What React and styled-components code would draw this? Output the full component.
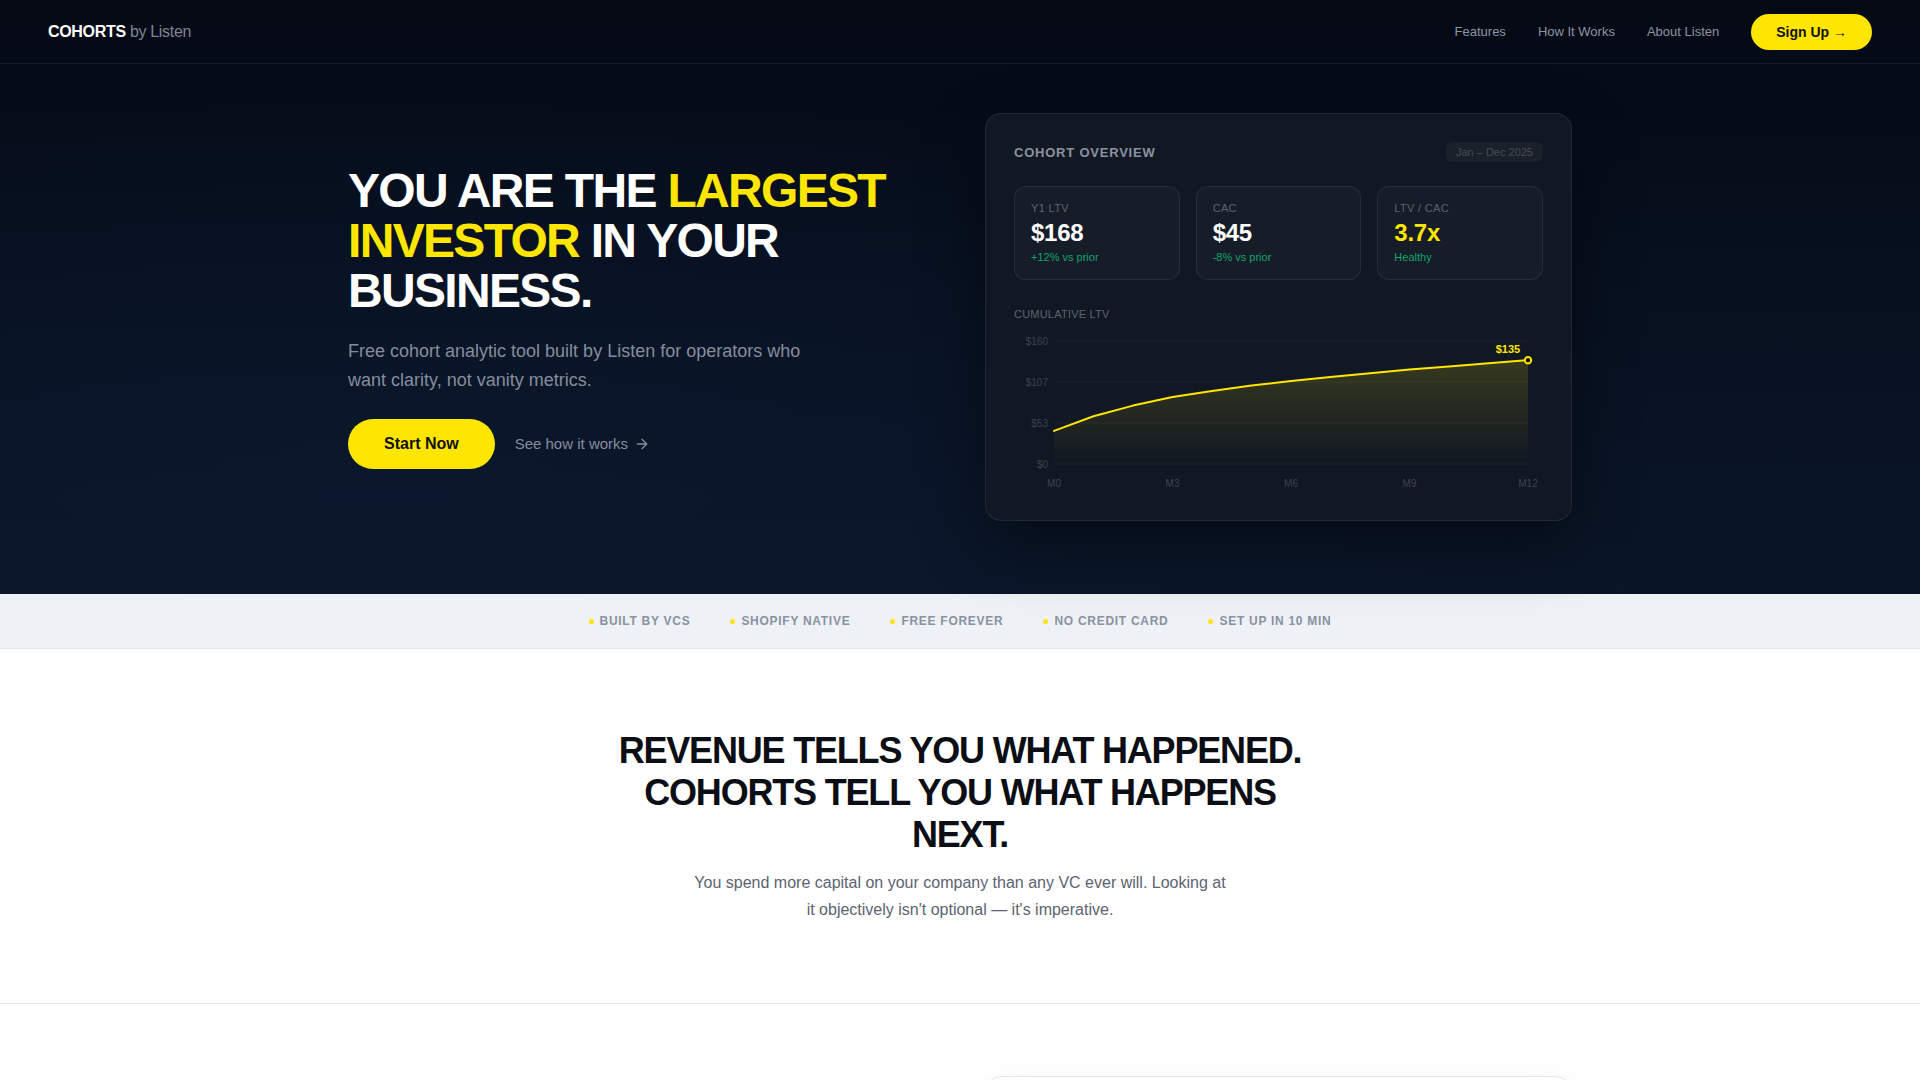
import React from "react";
import styled, { createGlobalStyle } from "styled-components";
import { ArrowRight } from "lucide-react";

const YELLOW = "#ffe600";

const GlobalStyle = createGlobalStyle`
  * {
    box-sizing: border-box;
  }
  body {
    margin: 0;
    background: #ffffff;
    font-family: "Liberation Sans", Arial, sans-serif;
    -webkit-font-smoothing: antialiased;
  }
`;

const metrics = [
  { label: "Y1 LTV", value: "$168", note: "+12% vs prior" },
  { label: "CAC", value: "$45", note: "-8% vs prior" },
  { label: "LTV / CAC", value: "3.7x", note: "Healthy", highlight: true },
];

const proofPoints = ["Built by VCs", "Shopify native", "Free forever", "No credit card", "Set up in 10 min"];

// cumulative LTV by month, M0..M12
const ltv = [43, 62, 76, 87, 95, 102, 108, 113, 118, 123, 127, 131, 135];

export default function App() {
  return (
    <>
      <GlobalStyle />
      <Hero>
        <Nav>
          <Logo>
            COHORTS <span>by Listen</span>
          </Logo>
          <NavLinks>
            <NavLink href="#features">Features</NavLink>
            <NavLink href="#how">How It Works</NavLink>
            <NavLink href="#about">About Listen</NavLink>
            <SignUp type="button">Sign Up →</SignUp>
          </NavLinks>
        </Nav>
        <HeroGrid>
          <HeroCopy>
            <Headline>
              YOU ARE THE <Accent>LARGEST INVESTOR</Accent> IN YOUR BUSINESS.
            </Headline>
            <Lead>Free cohort analytic tool built by Listen for operators who want clarity, not vanity metrics.</Lead>
            <Actions>
              <PrimaryButton type="button">Start Now</PrimaryButton>
              <GhostLink href="#how">
                See how it works <ArrowRight size={16} strokeWidth={2} />
              </GhostLink>
            </Actions>
          </HeroCopy>
          <OverviewCard>
            <CardHeader>
              <CardTitle>COHORT OVERVIEW</CardTitle>
              <DateBadge>Jan – Dec 2025</DateBadge>
            </CardHeader>
            <MetricGrid>
              {metrics.map((m) => (
                <Metric key={m.label}>
                  <MetricLabel>{m.label}</MetricLabel>
                  <MetricValue highlight={m.highlight}>{m.value}</MetricValue>
                  <MetricNote>{m.note}</MetricNote>
                </Metric>
              ))}
            </MetricGrid>
            <ChartLabel>CUMULATIVE LTV</ChartLabel>
            <LtvChart data={ltv} />
          </OverviewCard>
        </HeroGrid>
      </Hero>

      <ProofStrip>
        {proofPoints.map((p) => (
          <ProofItem key={p}>{p}</ProofItem>
        ))}
      </ProofStrip>

      <Statement>
        <StatementTitle>REVENUE TELLS YOU WHAT HAPPENED. COHORTS TELL YOU WHAT HAPPENS NEXT.</StatementTitle>
        <StatementText>
          You spend more capital on your company than any VC ever will. Looking at it objectively isn't optional —
          it's imperative.
        </StatementText>
      </Statement>

      <NextSection>
        <NextGrid>
          <div />
          <PreviewCard />
        </NextGrid>
      </NextSection>
    </>
  );
}

function LtvChart({ data }) {
  const left = 40;
  const right = 514;
  const base = 136;
  const top = 13;
  const scale = (base - top) / 160;
  const step = (right - left) / (data.length - 1);
  const pts = data.map((v, i) => [left + i * step, base - v * scale]);
  const line = pts.map(([x, y]) => `${x.toFixed(1)},${y.toFixed(1)}`).join(" ");
  const area = `M${left},${base} L${line.replace(/ /g, " L")} L${right},${base} Z`;
  const ticks = [
    { y: top, label: "$160" },
    { y: 54, label: "$107" },
    { y: 95, label: "$53" },
    { y: base, label: "$0" },
  ];
  const months = ["M0", "M3", "M6", "M9", "M12"];
  const last = pts[pts.length - 1];

  return (
    <ChartSvg viewBox="0 0 529 164" width="529" height="164">
      <defs>
        <linearGradient id="ltvFill" x1="0" y1="0" x2="0" y2="1">
          <stop offset="0%" stopColor={YELLOW} stopOpacity="0.16" />
          <stop offset="100%" stopColor={YELLOW} stopOpacity="0" />
        </linearGradient>
      </defs>
      {ticks.map((t) => (
        <g key={t.label}>
          <line x1={left} x2={right} y1={t.y} y2={t.y} stroke="rgba(255,255,255,0.05)" strokeWidth="1" />
          <text x="34" y={t.y + 3.5} textAnchor="end" className="axis">
            {t.label}
          </text>
        </g>
      ))}
      {months.map((m, i) => (
        <text key={m} x={left + i * step * 3} y="158.5" textAnchor="middle" className="axis">
          {m}
        </text>
      ))}
      <path d={area} fill="url(#ltvFill)" />
      <polyline points={line} fill="none" stroke={YELLOW} strokeWidth="2" strokeLinejoin="round" strokeLinecap="round" />
      <circle cx={last[0]} cy={last[1]} r="3.2" fill="#111823" stroke={YELLOW} strokeWidth="2" />
      <text x="494" y="25" textAnchor="middle" className="peak">
        $135
      </text>
    </ChartSvg>
  );
}

const Hero = styled.header`
  background: radial-gradient(ellipse at 20% 80%, rgba(14, 30, 58, 0.35), transparent 60%),
    linear-gradient(180deg, #040914 0%, #07101f 45%, #0a1628 100%);
  padding-bottom: 73px;
`;

const Nav = styled.nav`
  height: 64px;
  padding: 0 48px;
  display: flex;
  align-items: center;
  justify-content: space-between;
  border-bottom: 1px solid rgba(255, 255, 255, 0.06);
`;

const Logo = styled.a`
  font-size: 16px;
  font-weight: 700;
  letter-spacing: -0.02em;
  color: #ffffff;

  span {
    font-weight: 400;
    color: #7d8595;
  }
`;

const NavLinks = styled.div`
  display: flex;
  align-items: center;
  gap: 32px;
`;

const NavLink = styled.a`
  font-size: 13px;
  color: #8d95a4;
  text-decoration: none;
`;

const SignUp = styled.button`
  height: 36px;
  padding: 0 25px;
  border: none;
  border-radius: 999px;
  background: ${YELLOW};
  color: #111111;
  font-family: inherit;
  font-size: 14px;
  font-weight: 700;
  cursor: pointer;
`;

const HeroGrid = styled.div`
  max-width: 1224px;
  margin: 49px auto 0;
  display: grid;
  grid-template-columns: 587px 587px;
  justify-content: space-between;
  align-items: center;
`;

const HeroCopy = styled.div`
  display: flex;
  flex-direction: column;
  align-items: flex-start;
`;

const Headline = styled.h1`
  margin: 0;
  font-size: 48px;
  line-height: 50px;
  font-weight: 700;
  letter-spacing: -0.035em;
  color: #ffffff;
`;

const Accent = styled.span`
  color: ${YELLOW};
`;

const Lead = styled.p`
  margin: 21px 0 0;
  max-width: 462px;
  font-size: 18px;
  line-height: 29px;
  color: #858d9c;
`;

const Actions = styled.div`
  margin-top: 24px;
  display: flex;
  align-items: center;
  gap: 20px;
`;

const PrimaryButton = styled.button`
  height: 50px;
  padding: 0 36px;
  border: none;
  border-radius: 999px;
  background: ${YELLOW};
  color: #111111;
  font-family: inherit;
  font-size: 16px;
  font-weight: 700;
  cursor: pointer;
`;

const GhostLink = styled.a`
  display: inline-flex;
  align-items: center;
  gap: 6px;
  font-size: 15px;
  color: #858d9c;
  text-decoration: none;
`;

const OverviewCard = styled.section`
  padding: 28px;
  border-radius: 16px;
  background: #111823;
  border: 1px solid rgba(255, 255, 255, 0.08);
  box-shadow: 0 24px 64px rgba(0, 0, 0, 0.45);
`;

const CardHeader = styled.div`
  height: 20px;
  display: flex;
  align-items: center;
  justify-content: space-between;
  margin-bottom: 24px;
`;

const CardTitle = styled.h2`
  margin: 0;
  font-size: 13px;
  font-weight: 700;
  letter-spacing: 0.06em;
  color: #8b92a0;
`;

const DateBadge = styled.span`
  height: 20px;
  padding: 0 10px;
  display: inline-flex;
  align-items: center;
  border-radius: 6px;
  background: rgba(255, 255, 255, 0.04);
  font-size: 11px;
  color: #434b59;
`;

const MetricGrid = styled.div`
  display: grid;
  grid-template-columns: repeat(3, 1fr);
  gap: 16px;
`;

const Metric = styled.div`
  padding: 15px 16px;
  border-radius: 12px;
  background: #161d29;
  border: 1px solid rgba(255, 255, 255, 0.07);
`;

const MetricLabel = styled.div`
  font-size: 11px;
  line-height: 13px;
  letter-spacing: 0.03em;
  color: #5b6370;
`;

const MetricValue = styled.div`
  margin-top: 4px;
  font-size: 24px;
  line-height: 28px;
  font-weight: 700;
  letter-spacing: -0.01em;
  color: ${(p) => (p.highlight ? YELLOW : "#ffffff")};
`;

const MetricNote = styled.div`
  margin-top: 4px;
  font-size: 11px;
  line-height: 13px;
  color: #12a46c;
`;

const ChartLabel = styled.div`
  margin-top: 28px;
  font-size: 11px;
  line-height: 13px;
  letter-spacing: 0.02em;
  color: #5b6370;
`;

const ChartSvg = styled.svg`
  display: block;
  margin-top: 7px;
  width: 100%;
  height: auto;
  overflow: visible;
  font-family: "Liberation Sans", Arial, sans-serif;

  .axis {
    font-size: 10px;
    fill: #3c4350;
  }
  .peak {
    font-size: 11px;
    font-weight: 700;
    fill: ${YELLOW};
  }
`;

const ProofStrip = styled.div`
  height: 55px;
  display: flex;
  align-items: center;
  justify-content: center;
  gap: 40px;
  background: #eef1f5;
  border-bottom: 1px solid #e2e5ea;
`;

const ProofItem = styled.span`
  display: inline-flex;
  align-items: center;
  gap: 6px;
  font-size: 12px;
  font-weight: 700;
  letter-spacing: 0.06em;
  text-transform: uppercase;
  color: #8a91a0;

  &::before {
    content: "";
    width: 5px;
    height: 5px;
    border-radius: 50%;
    background: ${YELLOW};
  }
`;

const Statement = styled.section`
  padding: 81px 24px 80px;
  text-align: center;
  border-bottom: 1px solid #e6e8ec;
`;

const StatementTitle = styled.h2`
  max-width: 720px;
  margin: 0 auto;
  font-size: 36px;
  line-height: 42px;
  font-weight: 700;
  letter-spacing: -0.033em;
  color: #0b0e15;
`;

const StatementText = styled.p`
  max-width: 540px;
  margin: 13px auto 0;
  font-size: 16px;
  line-height: 27px;
  color: #5c6371;
`;

const NextSection = styled.section`
  padding: 72px 0;
`;

const NextGrid = styled.div`
  max-width: 1224px;
  margin: 0 auto;
  display: grid;
  grid-template-columns: 587px 587px;
  justify-content: space-between;
`;

const PreviewCard = styled.div`
  height: 420px;
  border-radius: 16px;
  background: #ffffff;
  border: 1px solid #e5e7eb;
  box-shadow: 0 20px 48px rgba(15, 23, 42, 0.08);
`;
